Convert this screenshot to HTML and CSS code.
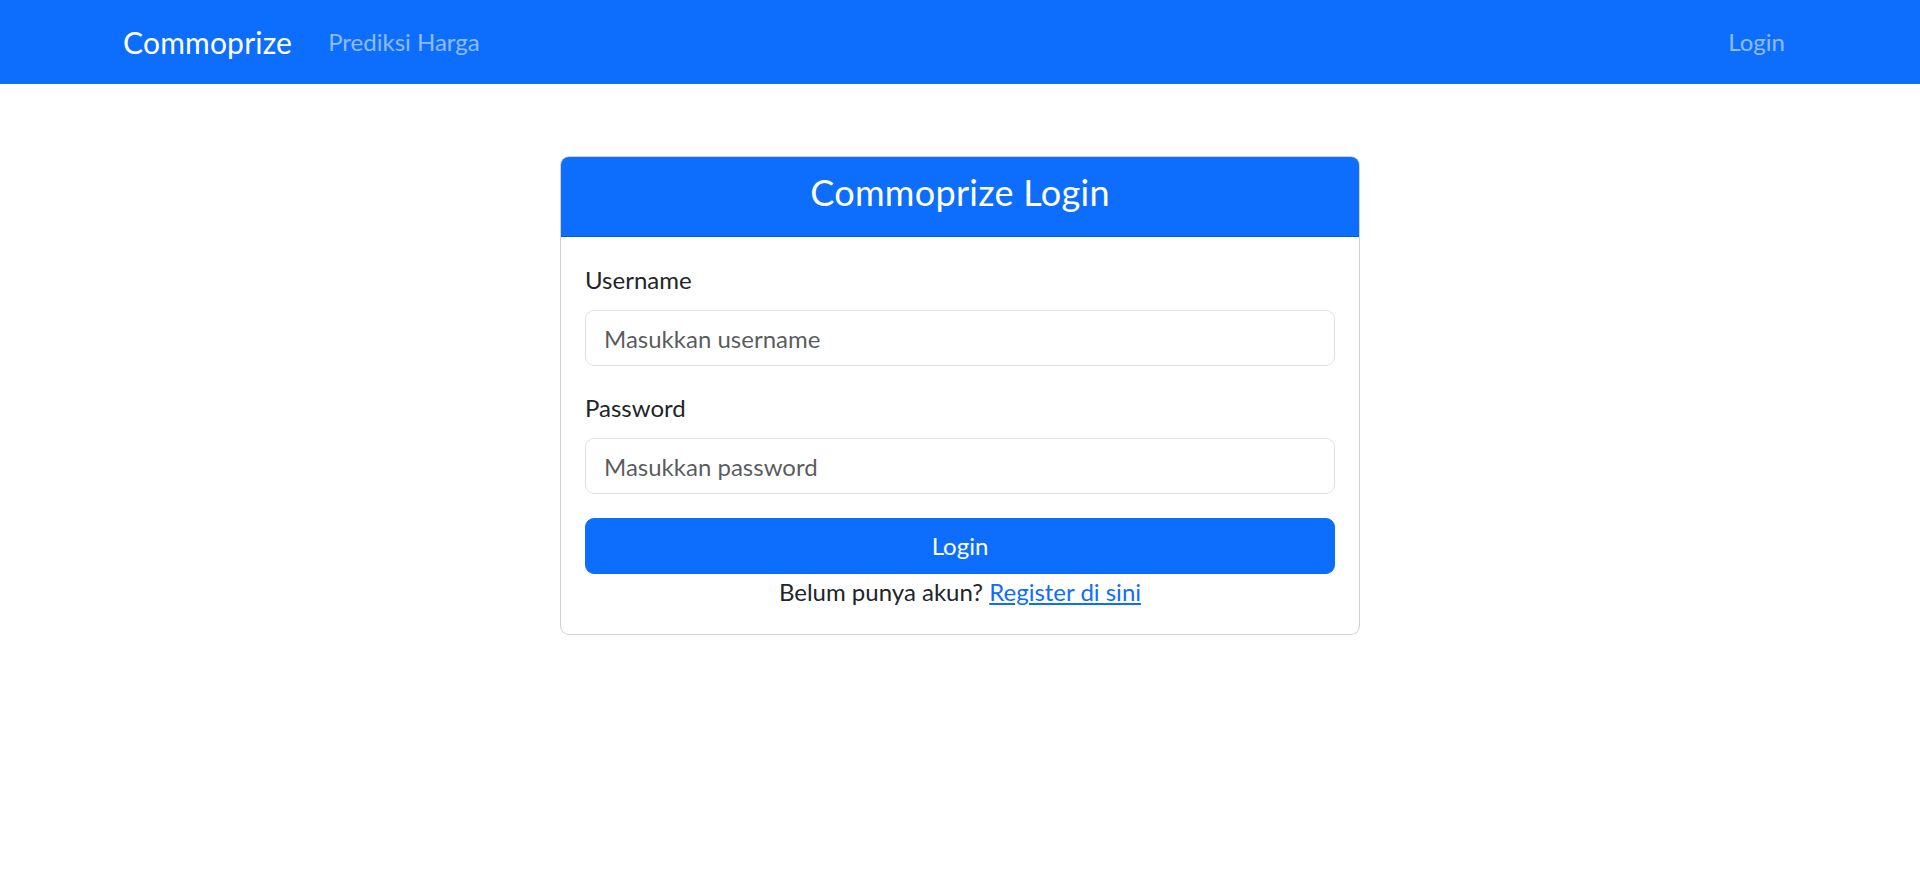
FILE: index.html
```html
<!DOCTYPE html>
<html lang="id">
<head>
<meta charset="utf-8">
<title>Commoprize Login</title>
<link rel="stylesheet" href="styles.css">
</head>
<body>
<nav class="navbar">
  <div class="nav-container">
    <a class="brand" href="#">Commoprize</a>
    <ul class="nav-links">
      <li><a class="nav-link" href="#">Prediksi Harga</a></li>
    </ul>
    <ul class="nav-links nav-right">
      <li><a class="nav-link" href="#">Login</a></li>
    </ul>
  </div>
</nav>
<main class="main">
  <div class="card">
    <div class="card-header">
      <h4 class="card-title">Commoprize Login</h4>
    </div>
    <form class="card-body">
      <div class="field">
        <label class="form-label" for="username">Username</label>
        <input class="form-control" id="username" type="text" placeholder="Masukkan username">
      </div>
      <div class="field">
        <label class="form-label" for="password">Password</label>
        <input class="form-control" id="password" type="password" placeholder="Masukkan password">
      </div>
      <button class="btn-primary" type="button">Login</button>
      <p class="register">Belum punya akun? <a href="#">Register di sini</a></p>
    </form>
  </div>
</main>
</body>
</html>
```
FILE: styles.css
```css
* { box-sizing: border-box; }
html, body { margin: 0; padding: 0; }
body {
  font-family: Lato, "Open Sans", sans-serif;
  font-size: 24px;
  line-height: 1.5;
  color: #212529;
  background: #fff;
}
.navbar {
  background: #0d6efd;
  height: 84px;
  display: flex;
  align-items: center;
}
.nav-container {
  width: 1710px;
  margin: 0 auto;
  padding: 0 18px;
  display: flex;
  align-items: center;
}
.brand {
  color: #fff;
  text-decoration: none;
  font-size: 30px;
  letter-spacing: 0.2px;
  line-height: 1.5;
  padding: 7px 0;
  margin-right: 24px;
}
.nav-links {
  list-style: none;
  margin: 0;
  padding: 0;
  display: flex;
}
.nav-right { margin-left: auto; }
.nav-link {
  display: block;
  padding: 12px;
  color: rgba(255,255,255,.55);
  text-decoration: none;
  font-size: 24px;
  line-height: 1.5;
}
.main {
  display: flex;
  justify-content: center;
  padding-top: 72px;
}
.card {
  width: 800px;
  border: 1px solid rgba(0,0,0,.175);
  border-radius: 9px;
  overflow: hidden;
  background: #fff;
}
.card-header {
  background: #0d6efd;
  color: #fff;
  text-align: center;
  padding: 14px 24px 12px;
  border-bottom: 1px solid rgba(0,0,0,.175);
}
.card-title {
  margin: 0 0 10px;
  font-size: 36px;
  letter-spacing: 0.3px;
  font-weight: 400;
  line-height: 1.2;
}
.card-body {
  padding: 25px 24px 24px;
  display: flex;
  flex-direction: column;
}
.field { margin-bottom: 24px; display: flex; flex-direction: column; }
.form-label { margin-bottom: 12px; }
.form-control {
  font: inherit;
  height: 56px;
  padding: 9px 18px;
  border: 1px solid #dee2e6;
  border-radius: 9px;
  color: #212529;
  background: #fff;
}
.form-control::placeholder { color: rgba(33,37,41,.75); }
.btn-primary {
  font: inherit;
  height: 56px;
  border: 1px solid #0d6efd;
  background: #0d6efd;
  color: #fff;
  border-radius: 9px;
  cursor: pointer;
}
.register {
  margin: 0;
  text-align: center;
}
.register a { color: #0d6efd; }
```
